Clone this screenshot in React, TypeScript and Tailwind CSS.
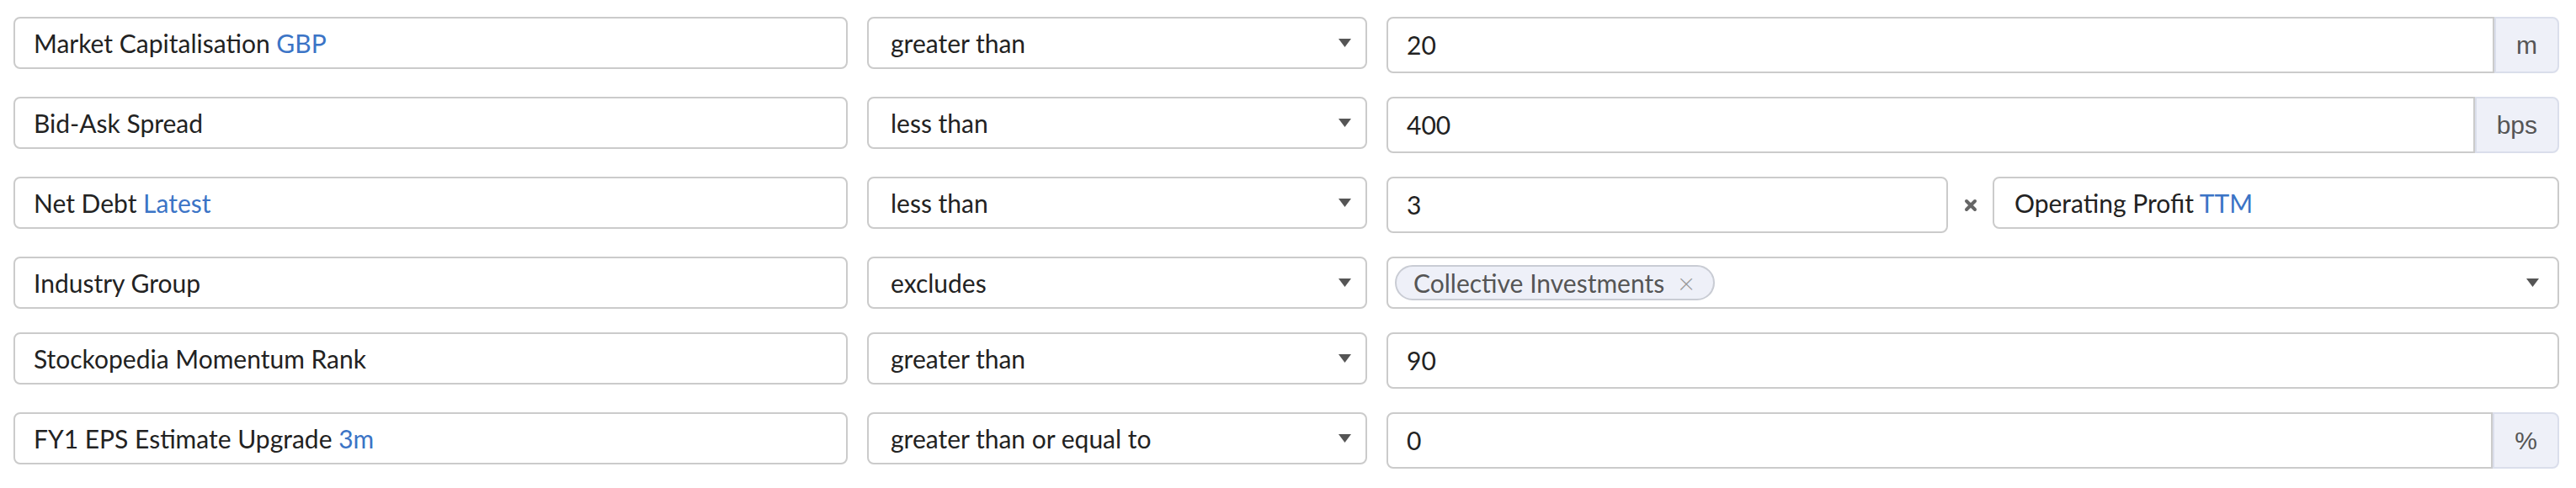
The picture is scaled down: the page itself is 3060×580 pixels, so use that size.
import React from "react";

type Row = {
  label: string;
  qualifier?: string;
  operator: string;
  kind: "value" | "ratio" | "tags";
  value?: string;
  unit?: string;
  rhs?: { label: string; qualifier?: string };
  tags?: string[];
};

const rows: Row[] = [
  { label: "Market Capitalisation", qualifier: "GBP", operator: "greater than", kind: "value", value: "20", unit: "m" },
  { label: "Bid-Ask Spread", operator: "less than", kind: "value", value: "400", unit: "bps" },
  {
    label: "Net Debt",
    qualifier: "Latest",
    operator: "less than",
    kind: "ratio",
    value: "3",
    rhs: { label: "Operating Profit", qualifier: "TTM" },
  },
  { label: "Industry Group", operator: "excludes", kind: "tags", tags: ["Collective Investments"] },
  { label: "Stockopedia Momentum Rank", operator: "greater than", kind: "value", value: "90" },
  { label: "FY1 EPS Estimate Upgrade", qualifier: "3m", operator: "greater than or equal to", kind: "value", value: "0", unit: "%" },
];

// small filled caret used by the select boxes
function Caret() {
  return (
    <svg width="15" height="10" viewBox="0 0 15 10" className="shrink-0">
      <path d="M0 0 H15 L7.5 10 Z" fill="#555555" />
    </svg>
  );
}

function Field({ label, qualifier }: { label: string; qualifier?: string }) {
  return (
    <span className="truncate">
      {label}
      {qualifier && <span className="text-[#3b74c6]"> {qualifier}</span>}
    </span>
  );
}

function ValueInput({ value, unit }: { value: string; unit?: string }) {
  return (
    <div className="flex h-[67px] flex-1 items-stretch">
      <div
        className={`flex flex-1 items-center border-2 border-[#cbcbcb] bg-white pl-[22px] ${
          unit ? "rounded-l-[8px]" : "rounded-[8px]"
        }`}
      >
        {value}
      </div>
      {unit && (
        <div className="flex items-center rounded-r-[8px] border-2 border-[#dadeeb] bg-[#eef0f8] px-[24px] font-['Liberation_Sans',sans-serif] text-[#555555]">
          {unit}
        </div>
      )}
    </div>
  );
}

export default function App() {
  return (
    <div className="flex w-[3060px] flex-col gap-[28px] bg-white pt-[20px] pr-[20px] pl-[16px] font-['Lato',sans-serif] text-[30px] text-[#222222]">
      {rows.map((row, i) => (
        <div key={i} className="flex items-start gap-[23px]">
          {/* Field */}
          <div className="flex h-[62px] w-[991px] shrink-0 items-center rounded-[8px] border-2 border-[#cbcbcb] bg-white px-[22px]">
            <Field label={row.label} qualifier={row.qualifier} />
          </div>

          {/* Operator */}
          <div className="flex h-[62px] w-[594px] shrink-0 items-center justify-between rounded-[8px] border-2 border-[#cbcbcb] bg-white pr-[17px] pl-[26px]">
            <span>{row.operator}</span>
            <Caret />
          </div>

          {/* Value */}
          {row.kind === "value" && <ValueInput value={row.value!} unit={row.unit} />}

          {row.kind === "ratio" && (
            <div className="flex flex-1 items-start">
              <ValueInput value={row.value!} />
              <div className="flex h-[67px] w-[53px] items-center justify-center">
                <svg width="16" height="16" viewBox="0 0 16 16">
                  <path d="M3 3 L13 13 M13 3 L3 13" stroke="#666666" strokeWidth="4" strokeLinecap="round" />
                </svg>
              </div>
              <div className="flex h-[62px] w-[673px] items-center rounded-[8px] border-2 border-[#cbcbcb] bg-white px-[24px]">
                <Field label={row.rhs!.label} qualifier={row.rhs!.qualifier} />
              </div>
            </div>
          )}

          {row.kind === "tags" && (
            <div className="flex h-[62px] flex-1 items-center justify-between rounded-[8px] border-2 border-[#cbcbcb] bg-white pr-[22px] pl-[8px]">
              <div className="flex items-center gap-2">
                {row.tags!.map((t) => (
                  <span
                    key={t}
                    className="flex h-[42px] items-center gap-[16px] rounded-full border-2 border-[#c9ccd4] bg-[#eef0f8] pr-[22px] pl-[20px] text-[#555555]"
                  >
                    {t}
                    <span className="text-[34px] leading-none font-light text-[#999999]">×</span>
                  </span>
                ))}
              </div>
              <Caret />
            </div>
          )}
        </div>
      ))}
    </div>
  );
}
